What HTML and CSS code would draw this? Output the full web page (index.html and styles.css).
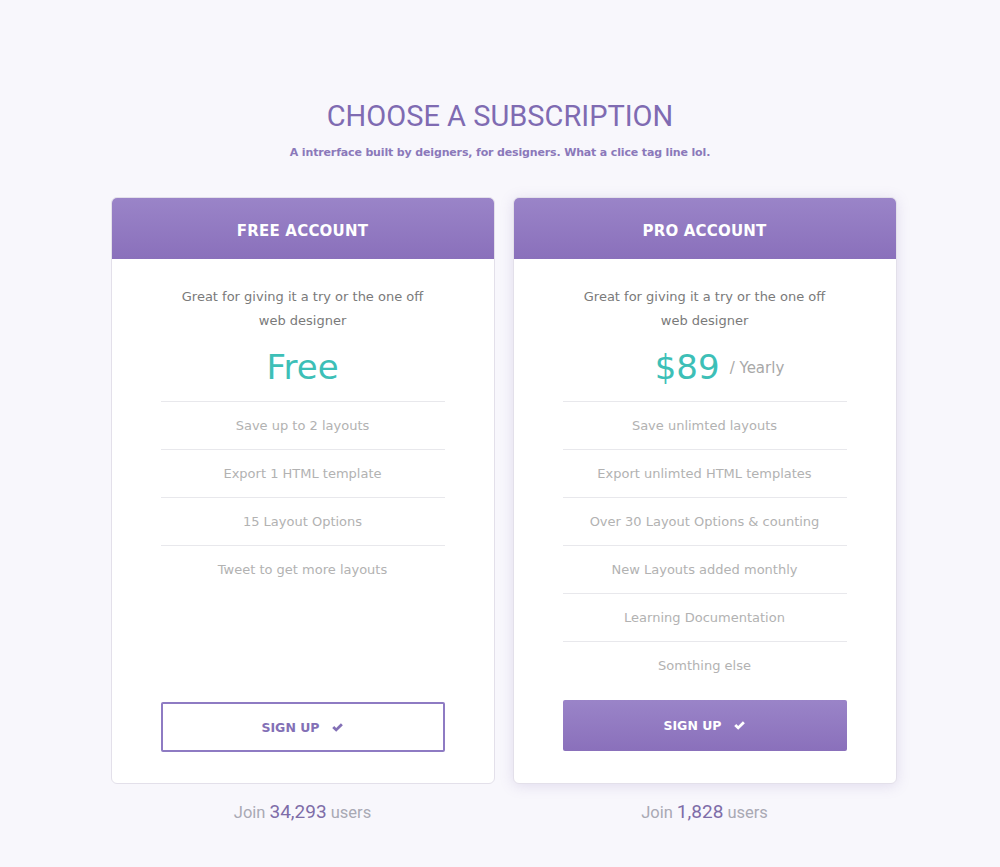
FILE: index.html
```html
<!DOCTYPE html>
<html lang="en">
<head>
  <meta charset="UTF-8">
  <title>Choose a Subscription</title>
  <link rel="stylesheet" href="styles.css">
</head>
<body>
  <h1 class="title">CHOOSE A SUBSCRIPTION</h1>
  <p class="tagline">A intrerface built by deigners, for designers. What a clice tag line lol.</p>

  <div class="plans">
    <div class="plan">
      <div class="card">
        <div class="card-head">FREE ACCOUNT</div>
        <div class="card-body">
          <p class="desc">Great for giving it a try or the one off<br>web designer</p>
          <div class="price"><span class="amount">Free</span></div>
          <ul class="features">
            <li>Save up to 2 layouts</li>
            <li>Export 1 HTML template</li>
            <li>15 Layout Options</li>
            <li>Tweet to get more layouts</li>
          </ul>
          <button class="btn btn-outline">SIGN UP
            <svg class="check" viewBox="0 0 16 16"><path d="M1.5 8.6 L4 6.2 L6.4 8.5 L12.2 2.8 L14.6 5.2 L6.4 13.3 Z"/></svg>
          </button>
        </div>
      </div>
      <p class="join">Join <span class="count">34,293</span> users</p>
    </div>

    <div class="plan">
      <div class="card card-pro">
        <div class="card-head">PRO ACCOUNT</div>
        <div class="card-body">
          <p class="desc">Great for giving it a try or the one off<br>web designer</p>
          <div class="price price-period"><span class="amount">$89</span><span class="period">/ Yearly</span></div>
          <ul class="features">
            <li>Save unlimted layouts</li>
            <li>Export unlimted HTML templates</li>
            <li>Over 30 Layout Options &amp; counting</li>
            <li>New Layouts added monthly</li>
            <li>Learning Documentation</li>
            <li>Somthing else</li>
          </ul>
          <button class="btn btn-fill">SIGN UP
            <svg class="check" viewBox="0 0 16 16"><path d="M1.5 8.6 L4 6.2 L6.4 8.5 L12.2 2.8 L14.6 5.2 L6.4 13.3 Z"/></svg>
          </button>
        </div>
      </div>
      <p class="join">Join <span class="count">1,828</span> users</p>
    </div>
  </div>
</body>
</html>
```

FILE: styles.css
```css
body {
  margin: 0;
  background-color: #f8f7fc;
  font-family: 'DejaVu Sans', sans-serif;
  padding-top: 98px;
}
.title {
  margin: 0;
  text-align: center;
  font-family: Roboto, sans-serif;
  font-weight: 400;
  font-size: 29px;
  line-height: 36px;
  color: #7f6bb2;
}
.tagline {
  margin: 11px 0 0;
  text-align: center;
  font-size: 11px;
  font-weight: bold;
  letter-spacing: -0.15px;
  color: #8b79ba;
  line-height: 16px;
}
.plans {
  display: flex;
  justify-content: center;
  gap: 18px;
  margin-top: 36px;
  padding-left: 7px;
}
.plan {
  width: 384px;
  display: flex;
  flex-direction: column;
}
.card {
  flex: 1;
  display: flex;
  flex-direction: column;
  background-color: #fff;
  border: 1px solid #e3e0ea;
  border-radius: 6px;
  overflow: hidden;
}
.card-pro {
  box-shadow: 0 2px 14px rgba(120, 100, 170, 0.18);
}
.card-head {
  height: 61px;
  display: flex;
  align-items: center;
  justify-content: center;
  padding-top: 4px;
  box-sizing: border-box;
  background: linear-gradient(#9a84c8, #8a70bb);
  color: #fff;
  font-weight: bold;
  font-size: 15px;
  letter-spacing: 0.2px;
}
.card-body {
  flex: 1;
  display: flex;
  flex-direction: column;
  padding: 26px 49px 31px;
}
.desc {
  margin: 0;
  text-align: center;
  font-size: 13px;
  line-height: 24px;
  color: #7a7a7a;
}
.price {
  display: flex;
  justify-content: center;
  align-items: center;
  margin-top: 14px;
  height: 40px;
  margin-bottom: 14px;
}
.price-period {
  padding-left: 30px;
}
.amount {
  font-size: 34px;
  line-height: 40px;
  color: #3dbfb7;
}
.period {
  margin-left: 10px;
  margin-top: 2px;
  font-size: 15px;
  color: #a8a8a8;
}
.features {
  list-style: none;
  margin: 0 0 11px;
  padding: 0;
}
.features li {
  border-top: 1px solid #e8e8ec;
  height: 47px;
  display: flex;
  align-items: center;
  justify-content: center;
  font-size: 13px;
  color: #b2b2b2;
}
.btn {
  margin-top: auto;
  height: 50px;
  display: flex;
  align-items: center;
  justify-content: center;
  gap: 11px;
  font-family: 'DejaVu Sans', sans-serif;
  font-weight: bold;
  font-size: 12.5px;
  border-radius: 2px;
  cursor: pointer;
}
.btn-outline {
  background: #fff;
  border: 2px solid #8e7bc3;
  color: #8370b6;
}
.btn-fill {
  background: linear-gradient(#9a84c8, #8a70bb);
  border: none;
  color: #fff;
  height: 51px;
  margin-bottom: 1px;
}
.check {
  width: 13px;
  height: 13px;
  fill: currentColor;
}
.join {
  margin: 16px 0 0;
  text-align: center;
  font-family: Roboto, sans-serif;
  font-size: 16.5px;
  color: #a9a9b4;
}
.count {
  font-size: 19px;
  color: #7e6da8;
}
```
